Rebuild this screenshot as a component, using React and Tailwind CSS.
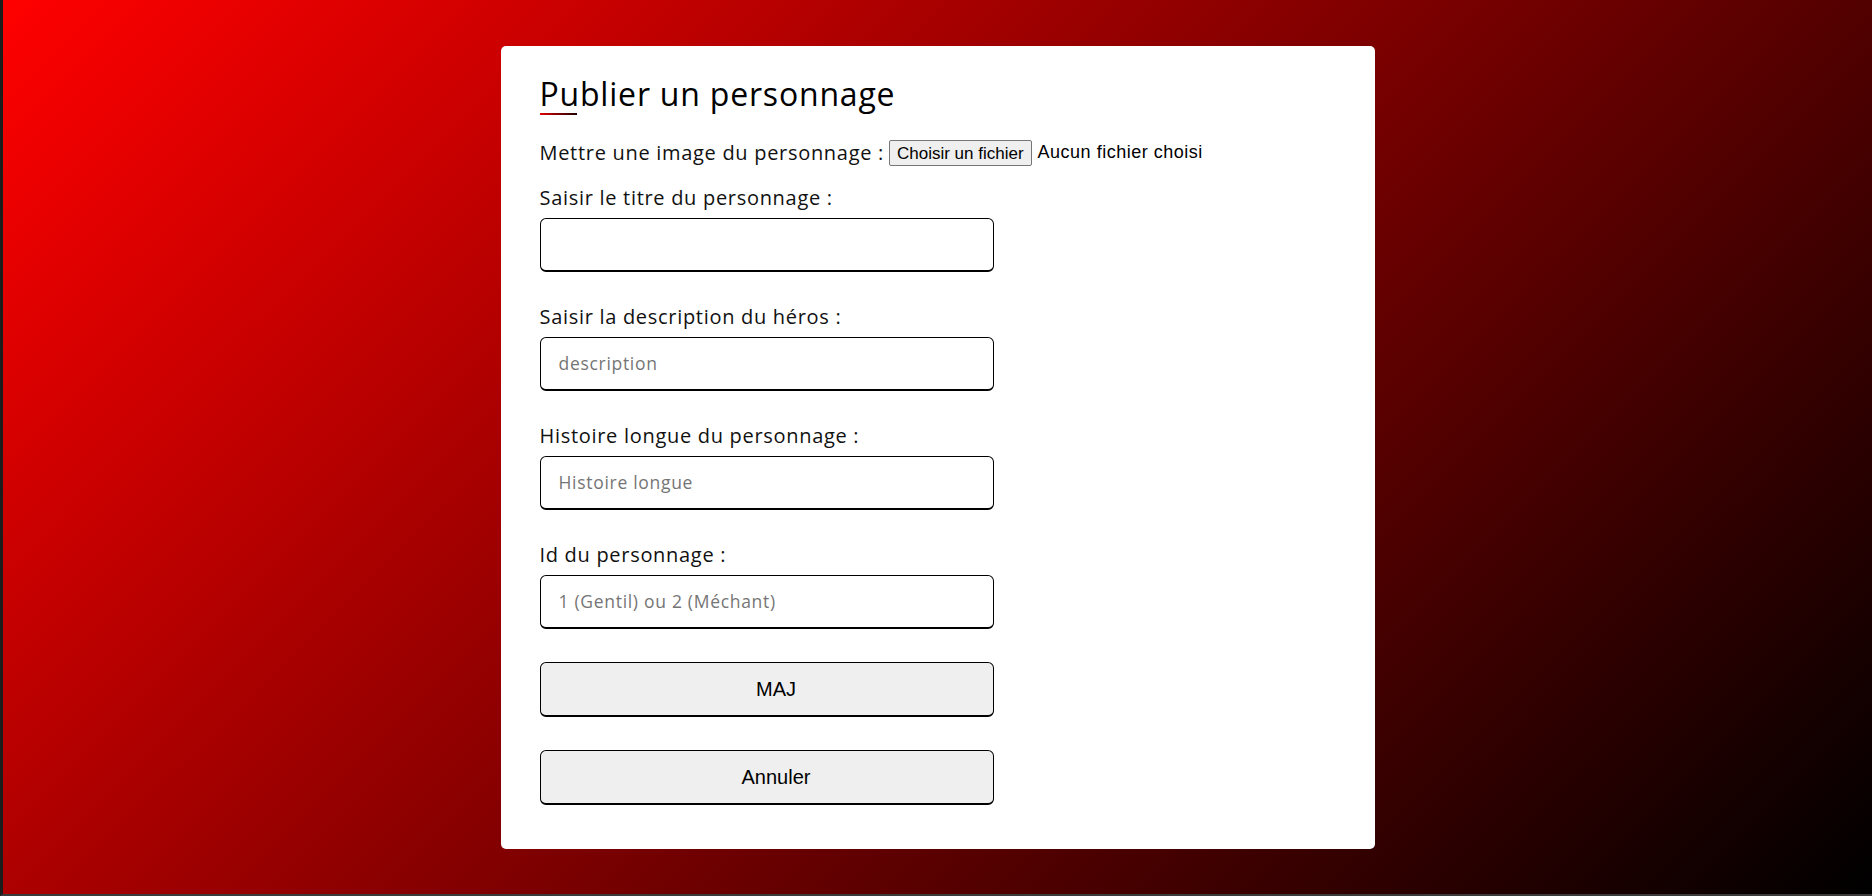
import React from 'react';

const fields = [
  { label: 'Saisir le titre du personnage :', placeholder: '' },
  { label: 'Saisir la description du héros :', placeholder: 'description' },
  { label: 'Histoire longue du personnage :', placeholder: 'Histoire longue' },
  { label: 'Id du personnage :', placeholder: '1 (Gentil) ou 2 (Méchant)' },
];

const App = () => {
  return (
    <div className="flex h-[896px] w-full items-center justify-center border-l-[3px] border-b-2 border-l-[#1c1c1c] border-b-[#3b3b3b] bg-[linear-gradient(135deg,#ff0000,#000000)] font-['Open_Sans',sans-serif]">
      <div className="flex h-[803px] w-[874px] flex-col rounded-[5px] bg-white px-[39px] pt-[32px] pb-[44px] text-[#111]">
        <h1 className="text-[32px] leading-none font-normal tracking-[0.8px] text-black">Publier un personnage</h1>
        <div className="mt-[3px] h-[3px] w-[37px] bg-[linear-gradient(90deg,#e00000,#1a0000)]" />

        <div className="mt-[25px] flex h-[26px] items-center text-[20px]">
          <span className="tracking-[0.7px]">Mettre une image du personnage :</span>
          <button className="ml-[5px] h-[26px] rounded-[2px] border border-[#767676] bg-[#efefef] px-[7px] font-['Liberation_Sans',Arial,sans-serif] text-[17px] text-black">
            Choisir un fichier
          </button>
          <span className="ml-[6px] font-['Liberation_Sans',Arial,sans-serif] text-[18px] tracking-[0.5px] text-black">
            Aucun fichier choisi
          </span>
        </div>

        <div className="mt-[20px] flex flex-col gap-[33px]">
          {fields.map((f) => (
            <div key={f.label} className="flex flex-col">
              <label className="mb-[8px] text-[20px] leading-6 tracking-[0.7px]">{f.label}</label>
              <input
                type="text"
                placeholder={f.placeholder}
                className="h-[54px] w-[454px] rounded-[6px] border border-b-2 border-black bg-white pl-[18px] text-[17.5px] tracking-[0.7px] placeholder:text-[#757575] outline-none"
              />
            </div>
          ))}
          <button className="h-[55px] w-[454px] rounded-[6px] border border-b-2 border-black bg-[#efefef] pl-[19px] font-['Liberation_Sans',Arial,sans-serif] text-[20px] text-black">
            MAJ
          </button>
          <button className="h-[55px] w-[454px] rounded-[6px] border border-b-2 border-black bg-[#efefef] pl-[19px] font-['Liberation_Sans',Arial,sans-serif] text-[20px] text-black">
            Annuler
          </button>
        </div>
      </div>
    </div>
  );
};

export default App;
